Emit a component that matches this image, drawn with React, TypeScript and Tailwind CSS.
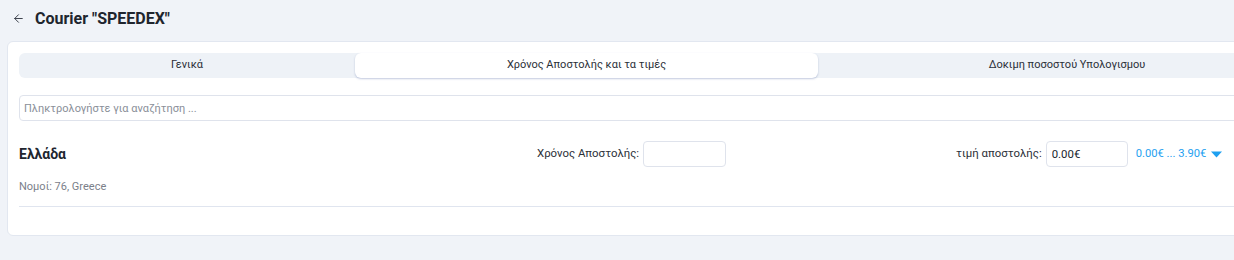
import { ArrowLeft } from "lucide-react";

const tabs = [
  { label: "Γενικά", width: "w-[336px]" },
  { label: "Χρόνος Αποστολής και τα τιμές", width: "w-[463px]", active: true },
  { label: "Δοκιμη ποσοστού Υπολογισμου", width: "w-[498px]" },
];

export default function App() {
  return (
    <div className="h-[260px] w-full overflow-hidden bg-[#f0f3f8] font-['Roboto',sans-serif] text-[#2d3340]">
      <div className="flex h-[37px] items-center pl-[12px]">
        <ArrowLeft size={13} strokeWidth={1.8} className="text-[#3a3f4a]" />
        <h1 className="ml-[10px] text-[16px] font-bold text-[#20252e]">Courier "SPEEDEX"</h1>
      </div>

      <div className="ml-[7px] mt-[4px] h-[195px] w-[1290px] rounded-md border border-[#e2e7f0] bg-white px-[11px] pt-[11px]">
        <div className="flex h-[25px] rounded-md bg-[#eef2f7]">
          {tabs.map((tab) => (
            <div
              key={tab.label}
              className={
                tab.active
                  ? `${tab.width} flex shrink-0 items-center justify-center rounded-md bg-white text-[11px] text-[#2b2f38] shadow-[0_1px_2px_rgba(80,100,160,0.35)]`
                  : `${tab.width} flex shrink-0 items-center justify-center text-[11px] text-[#2b2f38]`
              }
            >
              {tab.label}
            </div>
          ))}
        </div>

        <input
          className="mt-[17px] h-[26px] w-full rounded-[4px] border border-[#dfe3ec] px-[4px] text-[11px] outline-none placeholder:text-[#8a8f99]"
          placeholder="Πληκτρολογήστε για αναζήτηση ..."
        />

        <div className="mt-[20px] flex border-b border-[#e0e5ef] pb-[10px]">
          <div className="w-[518px]">
            <div className="flex h-[26px] items-center text-[14px] font-bold text-[#20252e]">Ελλάδα</div>
            <div className="mt-[12px] text-[11px] text-[#7b808a]">Νομοί: 76, Greece</div>
          </div>
          <div className="flex h-[26px] items-center gap-[4px]">
            <span className="text-[11.4px] text-[#2b2f38]">Χρόνος Αποστολής:</span>
            <input className="h-[26px] w-[83px] rounded-[4px] border border-[#dfe3ec] px-[6px] text-[11px] outline-none" />
          </div>
          <div className="ml-[230px] flex h-[26px] items-center">
            <span className="text-[11.4px] text-[#2b2f38]">τιμή αποστολής:</span>
            <input
              className="ml-[4px] h-[26px] w-[82px] rounded-[4px] border border-[#dfe3ec] px-[5px] text-[11.4px] text-[#20252e] outline-none"
              defaultValue="0.00€"
            />
            <span className="ml-[8px] text-[11.2px] text-[#1ea0f0]">0.00€ ... 3.90€</span>
            <svg width="11" height="7" viewBox="0 0 11 7" className="ml-[5px]">
              <path d="M0 0.5h11L5.5 6.5z" fill="#1ea0f0" />
            </svg>
          </div>
        </div>
      </div>
    </div>
  );
}
